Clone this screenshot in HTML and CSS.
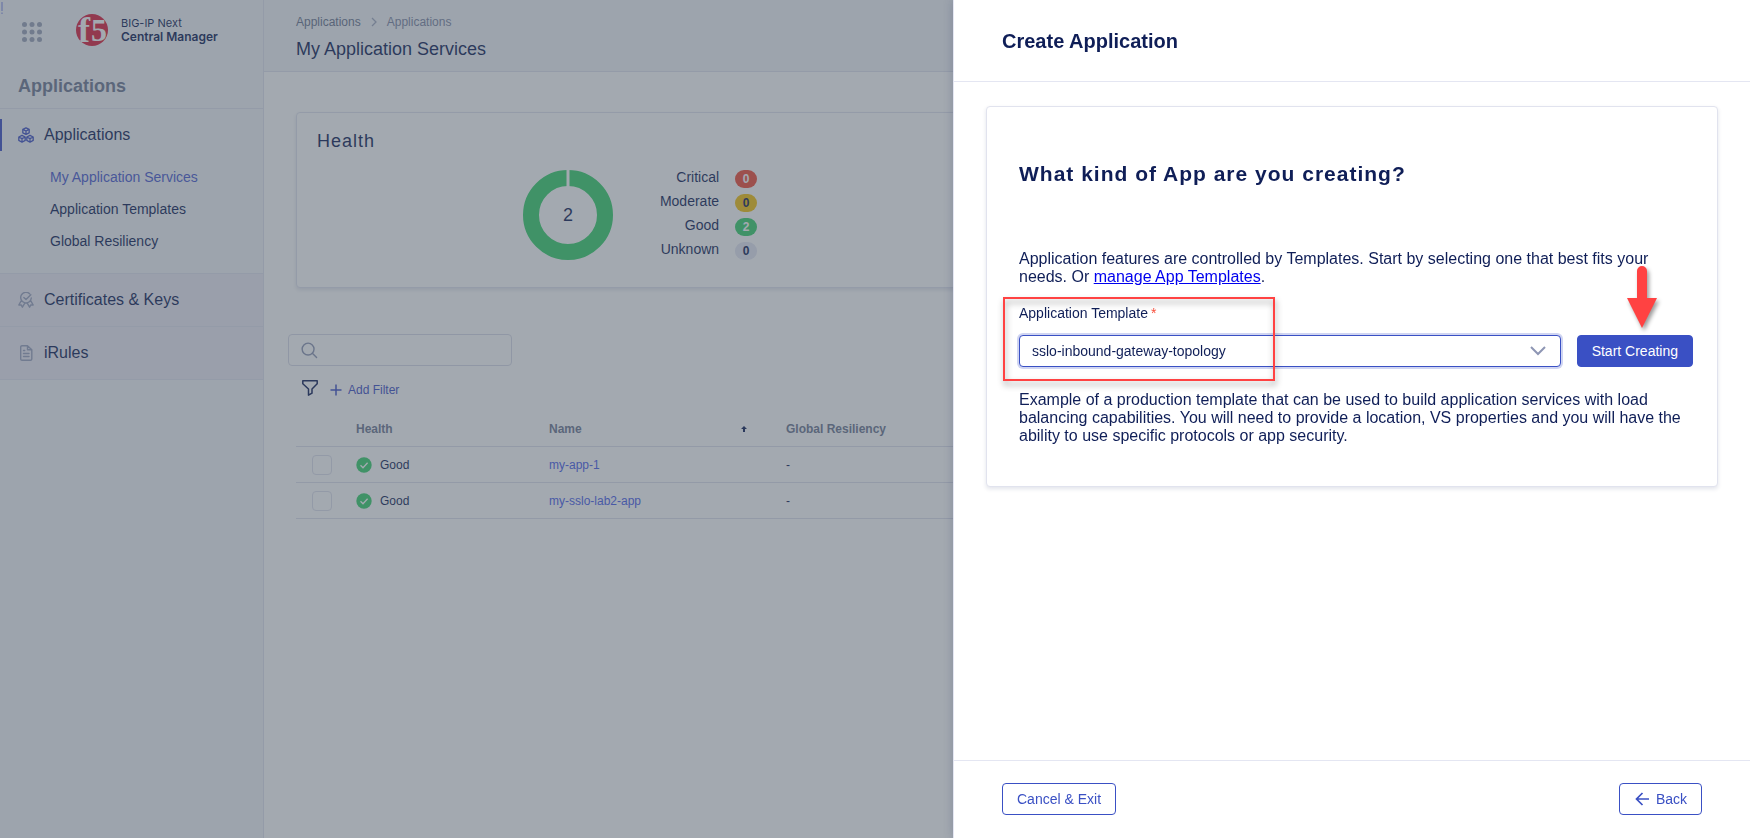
FILE: index.html
```html
<!DOCTYPE html>
<html lang="en">
<head>
<meta charset="utf-8">
<title>BIG-IP Next Central Manager</title>
<link rel="stylesheet" href="styles.css">
</head>
<body>
<div class="app">
  <aside class="sidebar">
    <svg class="edge-mark" width="2" height="12" viewBox="0 0 2 12" fill="#b4bdf0"><path d="M0 0h2v9H0zM0 10.500h2V12H0z"/></svg>
    <div class="brand">
      <button class="launcher" aria-label="Open launcher">
        <svg width="20" height="20" viewBox="0 0 20 20" fill="#9aa2b8">
          <circle cx="2.5" cy="2.5" r="2.5"/><circle cx="10" cy="2.5" r="2.5"/><circle cx="17.5" cy="2.5" r="2.5"/>
          <circle cx="2.5" cy="10" r="2.5"/><circle cx="10" cy="10" r="2.5"/><circle cx="17.5" cy="10" r="2.5"/>
          <circle cx="2.5" cy="17.5" r="2.5"/><circle cx="10" cy="17.5" r="2.5"/><circle cx="17.5" cy="17.5" r="2.5"/>
        </svg>
      </button>
      <svg class="logo" width="40" height="40" viewBox="-4 -4 40 40" aria-label="f5">
        <defs><clipPath id="disc"><circle cx="16" cy="16" r="16"/></clipPath></defs>
        <circle cx="16" cy="16" r="16" fill="#dc1f3d"/>
        <g clip-path="url(#disc)" class="logo-text"><text class="logo-f" x="2" y="28">f</text><text x="15" y="27">5</text></g>
      </svg>
      <div class="product"><span>BIG-IP Next</span><strong>Central Manager</strong></div>
    </div>
    <h2 class="side-title">Applications</h2>
    <nav>
      <section class="group">
        <a class="item active" href="#">
          <svg width="16" height="16" viewBox="0 0 16 16" fill="none" stroke="#3f51c6" stroke-width="1.3" stroke-linejoin="round">
            <path d="M8 .8l3.2 1.6v3.4L8 7.4 4.800 5.800V2.400zM4.800 2.400L8 4l3.200-1.600M8 4v3.400M4 8.400l3.200 1.600v3.400L4 15.200.8 13.400V10zM.8 10L4 11.600 7.200 10M4 11.600v3.600M12 8.400l3.200 1.600v3.400L12 15.200l-3.200-1.800V10zM8.800 10l3.200 1.600 3.200-1.600M12 11.600v3.600"/>
          </svg>
          Applications</a>
        <ul class="sub">
          <li><a class="current" href="#">My Application Services</a></li>
          <li><a href="#">Application Templates</a></li>
          <li><a href="#">Global Resiliency</a></li>
        </ul>
      </section>
      <a class="item closed" href="#">
        <svg width="16" height="16" viewBox="0 0 16 16" fill="none" stroke="#9aa2be" stroke-width="1.4" stroke-linecap="round" stroke-linejoin="round">
          <path d="M11.600 1.700A5.300 5.300 0 1 0 13.300 6M5.800 5.600L8 7.600l4.800-4.800M3.200 8.800L.8 13l2.400-.1 1.200 2.300 2.400-4M12.800 8.800l2.400 4.200-2.400-.1-1.200 2.300-2.400-4"/>
        </svg>
        Certificates &amp; Keys</a>
      <a class="item closed" href="#">
        <svg width="16" height="16" viewBox="0 0 16 16" fill="none" stroke="#9aa2be" stroke-width="1.4" stroke-linecap="round" stroke-linejoin="round">
          <path d="M9.500.7H4A1.300 1.300 0 0 0 2.700 2v12A1.300 1.300 0 0 0 4 15.300h8.500A1.300 1.300 0 0 0 13.800 14V4.800zM9.500.7v4.100h4.300M5.500 5.500h1.200M5.500 8.500h5.500M5.500 11.500h5.500"/>
        </svg>
        iRules</a>
    </nav>
  </aside>

  <main class="main">
    <header class="topbar">
      <nav class="crumbs" aria-label="Breadcrumb">
        <a href="#">Applications</a>
        <svg width="6" height="10" viewBox="0 0 6 10" fill="none" stroke="#a3aac0" stroke-width="1.300"><path d="M1 1l4 4-4 4"/></svg>
        <span>Applications</span>
      </nav>
      <h1>My Application Services</h1>
    </header>

    <div class="content">
      <div class="cards">
        <section class="card health">
          <h3>Health</h3>
          <div class="health-body">
            <svg width="90" height="90" viewBox="0 0 90 90">
              <circle cx="45" cy="45" r="37" fill="none" stroke="#38d06c" stroke-width="16"/>
              <path d="M45 0v17" stroke="#fff" stroke-width="3"/>
              <text class="donut-text" x="45" y="51" text-anchor="middle">2</text>
            </svg>
            <dl class="legend">
              <dt>Critical</dt><dd class="critical">0</dd>
              <dt>Moderate</dt><dd class="moderate">0</dd>
              <dt>Good</dt><dd class="good">2</dd>
              <dt>Unknown</dt><dd class="unknown">0</dd>
            </dl>
          </div>
        </section>
      </div>

      <label class="search">
        <svg width="17" height="17" viewBox="0 0 18 18" fill="none" stroke="#8e97b4" stroke-width="1.500" stroke-linecap="round"><circle cx="7.500" cy="7.500" r="6.300"/><path d="M12 12l4.500 4.500"/></svg>
        <input type="search" aria-label="Search">
      </label>
      <div class="filters">
        <svg width="16" height="16" viewBox="0 0 16 16" fill="none" stroke="#0f1e57" stroke-width="1.500" stroke-linejoin="round"><path d="M.8.800h14.400v3L10 9v4.200l-3.500 2V9L.8 3.800z"/></svg>
        <button class="add-filter">
          <svg width="12" height="12" viewBox="0 0 12 12" stroke="#3f51c6" stroke-width="1.500"><path d="M6 .500v11M.5 6h11"/></svg>
          Add Filter</button>
      </div>

      <table class="grid">
        <thead>
          <tr>
            <th class="col-check"></th>
            <th class="col-health">Health</th>
            <th class="col-name"><div class="sort">Name <svg width="6" height="8" viewBox="0 0 6 8" fill="#0f1e57"><path d="M3 1l3 3H4v3H2V4H0z"/></svg></div></th>
            <th>Global Resiliency</th>
          </tr>
        </thead>
        <tbody>
          <tr>
            <td><input type="checkbox" aria-label="Select my-app-1"></td>
            <td><span class="status"><svg width="16" height="16" viewBox="0 0 16 16"><circle cx="8" cy="8" r="7.700" fill="#38d06c"/><path d="M4.500 8.200L7 10.700l4.600-4.900" fill="none" stroke="#fff" stroke-width="1.300"/></svg>Good</span></td>
            <td><a href="#">my-app-1</a></td>
            <td>-</td>
          </tr>
          <tr>
            <td><input type="checkbox" aria-label="Select my-sslo-lab2-app"></td>
            <td><span class="status"><svg width="16" height="16" viewBox="0 0 16 16"><circle cx="8" cy="8" r="7.700" fill="#38d06c"/><path d="M4.500 8.200L7 10.700l4.600-4.900" fill="none" stroke="#fff" stroke-width="1.300"/></svg>Good</span></td>
            <td><a href="#">my-sslo-lab2-app</a></td>
            <td>-</td>
          </tr>
        </tbody>
      </table>
    </div>
  </main>
</div>

<div class="backdrop"></div>

<section class="drawer" role="dialog" aria-labelledby="drawer-title">
  <header class="drawer-head"><h2 id="drawer-title">Create Application</h2></header>
  <div class="drawer-body">
    <div class="card wizard">
      <h3>What kind of App are you creating?</h3>
      <p class="intro">Application features are controlled by Templates. Start by selecting one that best fits your needs. Or <a href="#">manage App Templates</a>.</p>
      <label class="field-label" for="template">Application Template<span class="required">*</span></label>
      <div class="field-row">
        <div class="select">
          <select id="template"><option>sslo-inbound-gateway-topology</option></select>
          <svg class="chevron" width="16" height="10" viewBox="0 0 16 10" fill="none" stroke="#8e96b4" stroke-width="2"><path d="M1 1l7 7 7-7"/></svg>
        </div>
        <div class="start">
          <button class="btn primary">Start Creating</button>
          <svg class="arrow" width="30" height="62" viewBox="0 0 30 62" fill="#ff4242"><path d="M10 32V5a5 5 0 0 1 10 0v27h10L15 62 0 32z"/></svg>
        </div>
        <span class="callout"></span>
      </div>
      <p class="help">Example of a production template that can be used to build application services with load balancing capabilities. You will need to provide a location, VS properties and you will have the ability to use specific protocols or app security.</p>
    </div>
  </div>
  <footer class="drawer-foot">
    <button class="btn">Cancel &amp; Exit</button>
    <button class="btn"><svg width="16" height="14" viewBox="-1 0 16 14" fill="none" stroke="#3a50c4" stroke-width="1.700"><path d="M7.500 1L1.500 7l6 6M1.500 7H14"/></svg>Back</button>
  </footer>
</section>
</body>
</html>
```
FILE: styles.css
```css
* { box-sizing: border-box; }

body {
  margin: 0;
  font-family: "Liberation Sans", Arial, sans-serif;
  font-size: 12px;
  color: #0f1e57;
  background: #fff;
}

h1, h2, h3, p, ul, dl, dd { margin: 0; padding: 0; }
ul { list-style: none; }
a { color: inherit; text-decoration: none; }
button { font: inherit; color: inherit; background: none; border: 0; padding: 0; cursor: pointer; }
svg { flex: none; display: block; }

.app { display: flex; min-height: 100vh; }

/* Sidebar */
.sidebar {
  flex: none;
  position: relative;
  width: 264px;
  background: #f3f5f9;
  border-right: 1px solid #e0e3ee;
}
.edge-mark { position: absolute; left: 1px; top: 2px; }

.brand { display: flex; align-items: center; height: 60px; padding-left: 22px; }
.launcher { margin-top: 4px; }
.logo { margin: 0 9px 0 30px; }
.logo-text {
  font-family: "Liberation Serif", "Times New Roman", serif;
  font-weight: bold;
  font-size: 32px;
  fill: #fff;
}
.logo-f { font-size: 36px; }
.product { display: flex; flex-direction: column; font-family: Inter, sans-serif; font-size: 11px; line-height: 14px; }
.product strong { font-size: 12px; font-weight: 600; }

.side-title {
  height: 49px;
  padding: 16px 18px 0;
  border-bottom: 1px solid #e0e3ee;
  font-size: 18px;
  line-height: 20px;
  color: #6e7993;
}

.group { padding: 10px 0 16px; border-bottom: 1px solid #e0e3ee; }
.item { display: flex; align-items: center; gap: 10px; font-size: 16px; padding-left: 18px; }
.active { height: 32px; padding-left: 16px; border-left: 2px solid #3f51c6; }
.closed { height: 53px; background: #edebf5; border-bottom: 1px solid #e0e3ee; }
.sub { padding: 10px 0 0 50px; font-size: 14px; line-height: 32px; }
.current { color: #4a5bd0; }

/* Page header */
.main { flex: 1; min-width: 0; }
.topbar { height: 72px; padding: 14px 32px 0; background: #f3f5f9; border-bottom: 1px solid #e0e3ee; }
.crumbs { display: flex; align-items: center; gap: 10px; line-height: 16px; color: #6a748f; }
.crumbs span { color: #7d87a4; }
.topbar h1 { margin-top: 8px; font-size: 18px; line-height: 22px; font-weight: 400; }

.content { padding: 40px 32px; }
.cards { display: grid; grid-template-columns: repeat(2, 1fr); gap: 32px; }
.card {
  background: #fff;
  border: 1px solid #e1e3ee;
  border-radius: 4px;
  box-shadow: 0 2px 4px rgba(15, 30, 87, 0.12);
}

.health { padding: 16px 20px 24px; height: 176px; }
.health h3 { font-size: 18px; line-height: 24px; font-weight: 400; letter-spacing: 1px; }
.health-body { display: flex; justify-content: center; align-items: center; gap: 47px; margin-top: 17px; padding-right: 7px; }
.donut-text { font-size: 18px; fill: #0f1e57; }
.legend {
  display: grid;
  grid-template-columns: auto 22px;
  column-gap: 16px;
  row-gap: 6px;
  font-size: 14px;
  line-height: 18px;
  text-align: right;
}
.legend dt { line-height: 14px; }
.legend dd { border-radius: 9px; font-size: 12px; font-weight: 700; text-align: center; color: #fff; }
.legend .critical { background: #f04d38; }
.legend .moderate { background: #f4c210; color: #0f1e57; }
.legend .good { background: #38d06c; }
.legend .unknown { background: #e4e6f2; color: #0f1e57; }

/* Search and filters */
.search {
  display: flex;
  align-items: center;
  width: 224px;
  height: 32px;
  margin: 46px 0 0 -8px;
  padding-left: 12px;
  border: 1px solid #d9dbe8;
  border-radius: 4px;
}
.search input { flex: 1; min-width: 0; border: 0; outline: 0; background: none; font: inherit; }
.filters { display: flex; align-items: center; gap: 12px; margin-top: 12px; padding-left: 6px; }
.add-filter { display: flex; align-items: center; gap: 6px; margin-top: 4px; line-height: 16px; color: #3f51c6; }

/* Table */
.grid { width: 100%; margin-top: 13px; border-spacing: 0; table-layout: fixed; }
.grid th, .grid td { height: 36px; padding: 0; border-bottom: 1px solid #dee0ec; text-align: left; }
.grid th { color: #6e7993; }
.grid a { color: #4a5eea; }
.col-check { width: 60px; }
.col-health { width: 193px; }
.col-name { width: 237px; }
.sort { display: flex; justify-content: space-between; align-items: center; padding-right: 39px; }
.status { display: flex; align-items: center; gap: 8px; }
.grid input {
  display: block;
  appearance: none;
  width: 20px;
  height: 20px;
  margin: 0 0 0 16px;
  border: 1px solid #dee0ec;
  border-radius: 4px;
}

.backdrop { position: fixed; inset: 0; background: rgba(71, 83, 97, 0.5); }

/* Drawer */
.drawer {
  position: fixed;
  inset: 0 0 0 auto;
  width: 797px;
  max-width: 100%;
  display: flex;
  flex-direction: column;
  background: #fff;
  border-left: 1px solid #e4e6f2;
  box-shadow: 0 0 10px rgba(15, 30, 87, 0.2);
}
.drawer-head { padding: 29px 48px 27px; border-bottom: 1px solid #e4e6f2; }
.drawer-head h2 { font-size: 20px; line-height: 25px; }
.drawer-body { flex: 1; padding: 24px 32px; }
.wizard { padding: 54px 24px 41px 32px; font-size: 16px; }
.wizard h3 { font-size: 21px; line-height: 26px; letter-spacing: 1px; }
.intro { margin-top: 63px; }
.intro a { color: #0000ee; text-decoration: underline; }
.field-label { display: block; margin-top: 17px; font-size: 14px; line-height: 20px; }
.required { padding-left: 3px; color: #f9503c; }
.field-row { position: relative; display: flex; gap: 16px; margin-top: 12px; }
.select { position: relative; flex: 1; }
.select select {
  display: block;
  appearance: none;
  width: 100%;
  height: 32px;
  padding: 0 40px 0 12px;
  border: 1px solid #3a50c4;
  border-radius: 4px;
  box-shadow: 0 0 0 2px #d0d5f2;
  background: #fff;
  font: inherit;
  font-size: 14px;
  color: #0f1e57;
}
.chevron { position: absolute; right: 15px; top: 11px; }
.help { margin-top: 24px; }

.btn {
  display: flex;
  align-items: center;
  gap: 6px;
  height: 32px;
  padding: 0 14px;
  border: 1px solid #3a50c4;
  border-radius: 4px;
  font-size: 14px;
  color: #3a50c4;
}
.primary { background: #3a50c4; color: #fff; }

/* Annotations over the form */
.start { position: relative; }
.arrow { position: absolute; left: 50px; bottom: 39px; filter: drop-shadow(2px 3px 2px rgba(0, 0, 0, 0.4)); }
.callout {
  position: absolute;
  left: -16px;
  top: -38px;
  width: 272px;
  height: 84px;
  border: 2px solid #ff4242;
  filter: drop-shadow(1px 4px 3px rgba(0, 0, 0, 0.4));
  pointer-events: none;
}

.drawer-foot { display: flex; justify-content: space-between; padding: 22px 48px 23px; border-top: 1px solid #e4e6f2; }
```
